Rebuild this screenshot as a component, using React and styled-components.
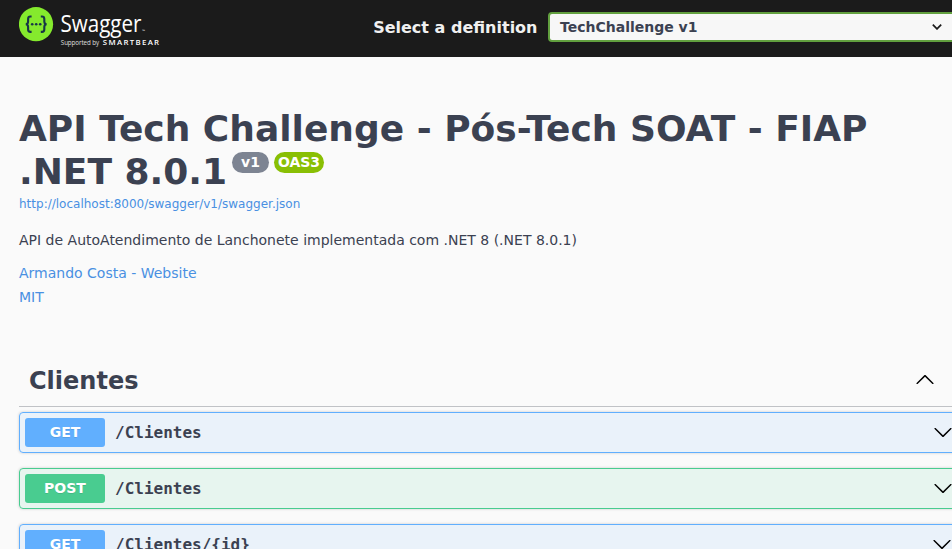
import React from 'react';
import styled, { createGlobalStyle } from 'styled-components';

const GlobalStyle = createGlobalStyle`
  * { box-sizing: border-box; }
  html, body { margin: 0; overflow: hidden; background: #fafafa; }
  body { font-family: "DejaVu Sans", sans-serif; color: #3b4151; }
  h2, h3, p { margin: 0; }
`;

const Page = styled.div`
  width: 952px;
  height: 549px;
  overflow: hidden;
`;

const Topbar = styled.header`
  display: flex;
  align-items: flex-start;
  height: 57px;
  padding-left: 19px;
  background: #1b1b1b;
`;

const Logo = styled.svg`
  flex: none;
  display: block;
  width: 144px;
  height: 57px;
`;

const DefinitionLabel = styled.label`
  display: flex;
  flex: none;
  align-items: center;
  gap: 10.5px;
  margin: 12px 0 0 auto;
  height: 30px;
  color: #f0f0f0;
  font-size: 16px;
  font-weight: 700;
  white-space: nowrap;
`;

const SelectBox = styled.div`
  display: flex;
  flex: none;
  align-items: center;
  justify-content: space-between;
  width: 410px;
  height: 30px;
  margin-right: -6px;
  padding: 0 14px 0 10px;
  border: 2px solid #62a03f;
  border-radius: 4px;
  background: #f7f7f7;
  color: #3b4151;
  font-size: 14px;
`;

const Info = styled.section`
  padding: 50px 19px 0;
  height: 297px;
`;

const Title = styled.h2`
  font-size: 36px;
  line-height: 43px;
  font-weight: 700;
  white-space: nowrap;
`;

const TitleLine = styled.div`
  display: flex;
  align-items: flex-start;
`;

const Badge = styled.span`
  width: ${({ $width }) => $width}px;
  height: 21px;
  margin: 2px 0 0 5px;
  border-radius: 57px;
  background: ${({ $color }) => $color};
  color: #fff;
  font-size: 14px;
  line-height: 21px;
  text-align: center;
`;

const Link = styled.a`
  display: block;
  width: max-content;
  color: #4990e2;
  font-size: ${({ $small }) => ($small ? 12 : 14)}px;
  line-height: ${({ $small }) => ($small ? 22 : 24)}px;
`;

const Description = styled.p`
  margin: 15px 0 11px;
  font-size: 14px;
  line-height: 20px;
`;

const TagHeading = styled.h3`
  display: flex;
  align-items: center;
  justify-content: space-between;
  width: 952px;
  height: 53px;
  margin-left: 19px;
  padding: 0 36px 0 10px;
  border-bottom: 1px solid rgba(59, 65, 81, 0.3);
  font-size: 24px;
  line-height: 30px;
`;

const TagName = styled.span`
  padding-top: 2px;
`;

const Operations = styled.div`
  display: grid;
  gap: 15px;
  width: 952px;
  padding: 5px 0 0 19px;
`;

const palette = {
  GET: { solid: '#61affe', tint: 'rgba(97, 175, 254, 0.1)' },
  POST: { solid: '#49cc90', tint: 'rgba(73, 204, 144, 0.1)' },
};

const Operation = styled.div`
  display: flex;
  align-items: center;
  width: 960px;
  height: 41px;
  padding: 0 0 0 5px;
  border: 1px solid ${({ $method }) => palette[$method].solid};
  border-radius: 4px;
  background: ${({ $method }) => palette[$method].tint};
  box-shadow: 0 0 3px rgba(0, 0, 0, 0.19);
`;

const Method = styled.span`
  width: 80px;
  height: 29px;
  border-radius: 3px;
  background: ${({ $method }) => palette[$method].solid};
  color: #fff;
  font-size: 14px;
  font-weight: 700;
  line-height: 28px;
  text-align: center;
  text-shadow: 0 1px 0 rgba(0, 0, 0, 0.1);
`;

const Path = styled.span`
  flex: 1;
  padding-left: 10px;
  font-family: "DejaVu Sans Mono", monospace;
  font-size: 16px;
  font-weight: 700;
`;

const Arrow = styled.svg`
  flex: none;
  width: 20px;
  height: 20px;
  margin-right: ${({ $inset }) => $inset || 0}px;
  margin-bottom: ${({ $lift }) => $lift || 1}px;
  fill: #000;
`;

const DOWN = 'M17.418 6.109c.272-.268.709-.268.979 0s.271.701 0 .969l-7.908 7.83c-.27.268-.707.268-.979 0l-7.908-7.83c-.27-.268-.27-.701 0-.969.271-.268.709-.268.979 0L10 13.25l7.418-7.141z';
const UP = 'M17.418 14.908c.272.268.709.268.979 0s.271-.701 0-.969l-7.908-7.83c-.27-.268-.707-.268-.979 0l-7.908 7.83c-.27.268-.27.701 0 .969.271.268.709.268.979 0L10 7.767l7.418 7.141z';

const operations = [
  { method: 'GET', path: '/Clientes', inset: 25 },
  { method: 'POST', path: '/Clientes', inset: 25 },
  { method: 'GET', path: '/Clientes/{id}', inset: 26 },
];

function SwaggerLogo() {
  return (
    <Logo viewBox="0 0 144 57" aria-label="Swagger">
      <circle cx="17" cy="24.2" r="17.1" fill="#85ea2d" />
      <g fill="none" stroke="#173647" strokeWidth="2.1">
        <path d="M12.6 16.5h-1.2c-1.7 0-2.3 .9-2.3 2.4v2.6c0 1.6-.7 2.6-2.3 2.7 1.6.1 2.3 1.1 2.3 2.7v2.6c0 1.5.6 2.4 2.3 2.4h1.2" />
        <path d="M21.8 16.5H23c1.7 0 2.3 .9 2.3 2.4v2.6c0 1.6.7 2.6 2.3 2.7-1.6.1-2.3 1.1-2.3 2.7v2.6c0 1.5-.6 2.4-2.3 2.4h-1.2" />
      </g>
      <g fill="#173647">
        <circle cx="13.2" cy="24.2" r="1.3" />
        <circle cx="17.2" cy="24.2" r="1.3" />
        <circle cx="21.2" cy="24.2" r="1.3" />
      </g>
      <g fill="#fff" fontFamily="'Open Sans', sans-serif">
        <text x="41.5" y="31.5" fontSize="23.5" fontWeight="400" textLength="81" lengthAdjust="spacingAndGlyphs">Swagger</text>
        <text x="123.2" y="32" fontSize="3.5">™</text>
        <text x="41.8" y="45.3" fontSize="6.2" opacity=".85" textLength="38.2" lengthAdjust="spacing">Supported by</text>
        <text x="83.8" y="45.3" fontSize="7.8" fontWeight="600" textLength="56.3" lengthAdjust="spacing">SMARTBEAR</text>
      </g>
    </Logo>
  );
}

export default function App() {
  return (
    <>
      <GlobalStyle />
      <Page>
        <Topbar>
          <SwaggerLogo />
          <DefinitionLabel>
            <span>Select a definition</span>
            <SelectBox>
              <span>TechChallenge v1</span>
              <svg width="10" height="6" viewBox="0 0 10 6" fill="none" stroke="#1b1b1b" strokeWidth="1.7">
                <path d="M.8 .7 5 4.9 9.2 .7" />
              </svg>
            </SelectBox>
          </DefinitionLabel>
        </Topbar>
        <Info>
          <Title>
            <TitleLine>API Tech Challenge - Pós-Tech SOAT - FIAP</TitleLine>
            <TitleLine>
              <span>.NET 8.0.1</span>
              <Badge $width={37} $color="#7d8492">v1</Badge>
              <Badge $width={50} $color="#89bf04">OAS3</Badge>
            </TitleLine>
          </Title>
          <Link $small>http://localhost:8000/swagger/v1/swagger.json</Link>
          <Description>API de AutoAtendimento de Lanchonete implementada com .NET 8 (.NET 8.0.1)</Description>
          <Link>Armando Costa - Website</Link>
          <Link>MIT</Link>
        </Info>
        <TagHeading>
          <TagName>Clientes</TagName>
          <Arrow viewBox="0 0 20 20" $lift={3}><path d={UP} /></Arrow>
        </TagHeading>
        <Operations>
          {operations.map(({ method, path, inset }) => (
            <Operation key={method + path} $method={method}>
              <Method $method={method}>{method}</Method>
              <Path>{path}</Path>
              <Arrow viewBox="0 0 20 20" $inset={inset}><path d={DOWN} /></Arrow>
            </Operation>
          ))}
        </Operations>
      </Page>
    </>
  );
}
